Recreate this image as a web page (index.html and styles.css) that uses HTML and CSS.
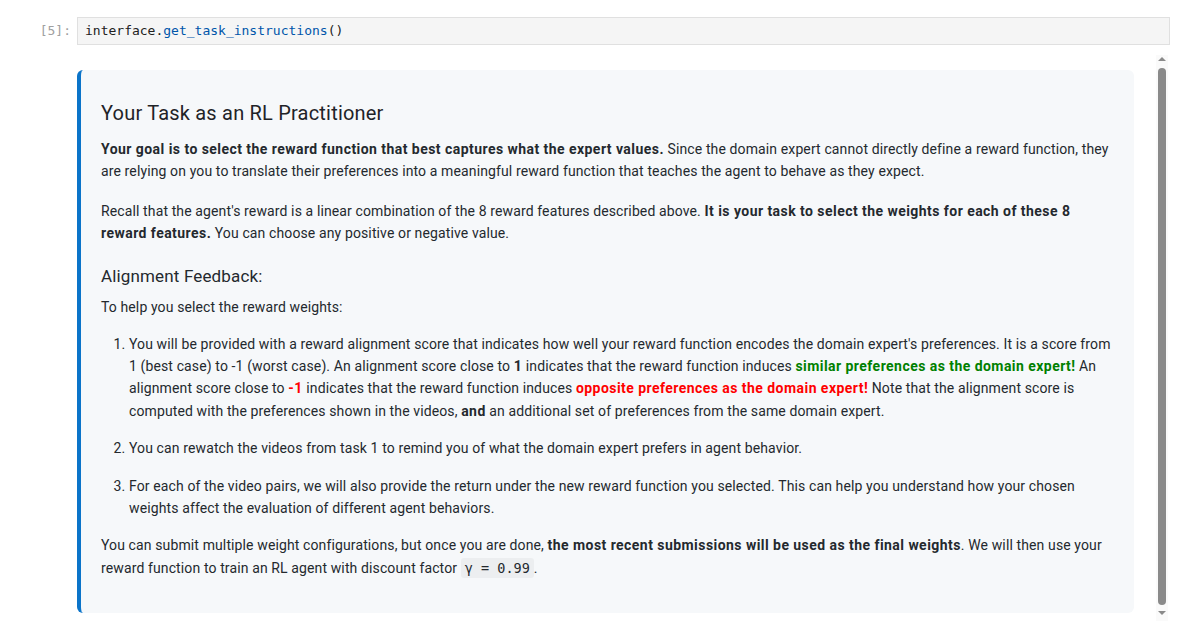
FILE: index.html
```html
<!DOCTYPE html>
<html>
<head>
<meta charset="utf-8">
<link rel="stylesheet" href="styles.css">
</head>
<body>
<div class="cell">
  <div class="input-row">
    <div class="prompt">[5]:</div>
    <div class="editor"><span class="c-var">interface.</span><span class="c-prop">get_task_instructions</span><span class="c-var">()</span></div>
  </div>
  <div class="output-row">
    <div class="output-area">
      <div class="card">
        <h2 class="title">Your Task as an RL Practitioner</h2>
        <p><b>Your goal is to select the reward function that best captures what the expert values.</b> Since the domain expert cannot directly define a reward function, they are relying on you to translate their preferences into a meaningful reward function that teaches the agent to behave as they expect.</p>
        <p>Recall that the agent's reward is a linear combination of the 8 reward features described above. <b>It is your task to select the weights for each of these 8 reward features.</b> You can choose any positive or negative value.</p>
        <h3 class="subtitle">Alignment Feedback:</h3>
        <p class="lead">To help you select the reward weights:</p>
        <ol class="steps">
          <li>You will be provided with a reward alignment score that indicates how well your reward function encodes the domain expert's preferences. It is a score from 1 (best case) to -1 (worst case). An alignment score close to <b>1</b> indicates that the reward function induces <b class="good">similar preferences as the domain expert!</b> An alignment score close to <b class="bad">-1</b> indicates that the reward function induces <b class="bad">opposite preferences as the domain expert!</b> Note that the alignment score is computed with the preferences shown in the videos, <b>and</b> an additional set of preferences from the same domain expert.</li>
          <li>You can rewatch the videos from task 1 to remind you of what the domain expert prefers in agent behavior.</li>
          <li>For each of the video pairs, we will also provide the return under the new reward function you selected. This can help you understand how your chosen weights affect the evaluation of different agent behaviors.</li>
        </ol>
        <p>You can submit multiple weight configurations, but once you are done, <b>the most recent submissions will be used as the final weights</b>. We will then use your reward function to train an RL agent with discount factor <code class="inline">γ = 0.99</code>.</p>
      </div>
    </div>
    <div class="scrollbar">
      <div class="arrow up"></div>
      <div class="thumb"></div>
      <div class="arrow down"></div>
    </div>
  </div>
</div>
</body>
</html>
```
FILE: styles.css
```css
html, body {
  margin: 0;
  padding: 0;
  background: #ffffff;
}
body {
  font-family: Roboto, "Noto Sans", sans-serif;
  color: #24292e;
  width: 1184px;
  height: 631px;
  overflow: hidden;
}
.cell {
  padding-top: 17px;
}
.input-row {
  display: flex;
  align-items: stretch;
  padding-right: 14px;
}
.prompt {
  width: 77px;
  box-sizing: border-box;
  padding-right: 6px;
  text-align: right;
  font-family: "DejaVu Sans Mono", monospace;
  font-size: 13px;
  color: #a0a0a0;
  line-height: 28px;
}
.editor {
  flex: 1;
  height: 28px;
  box-sizing: border-box;
  background: #f5f5f5;
  border: 1px solid #e0e0e0;
  padding-left: 7px;
  font-family: "DejaVu Sans Mono", monospace;
  font-size: 13px;
  line-height: 26px;
  color: #212121;
}
.c-prop { color: #0055aa; }
.c-var { color: #212121; }

.output-row {
  display: flex;
  margin-top: 10px;
  height: 566px;
}
.output-area {
  flex: 1;
  padding: 15px 22px 0 77px;
}
.card {
  background: #f6f8fa;
  border-left: 4px solid #0b74c9;
  border-radius: 6px;
  padding: 21px 20px 18px 20px;
  height: 543px;
  box-sizing: border-box;
  font-size: 14px;
  line-height: 22.4px;
  letter-spacing: 0.12px;
}
.title {
  font-size: 20px;
  font-weight: 400;
  margin: 9px 0 12px 0;
  line-height: 26px;
  letter-spacing: 0.2px;
  color: #1f2328;
}
.card p {
  margin: 0 0 17px 0;
}
.card p.lead {
  margin-bottom: 14.5px;
}
.subtitle {
  font-size: 17px;
  font-weight: 400;
  margin: 19px 0 8px 0;
  line-height: 24px;
  letter-spacing: 0.15px;
}
.card b {
  font-weight: 700;
  letter-spacing: 0.45px;
}
.good { color: #008000; }
.bad { color: #ff0000; }
.steps {
  margin: 0;
  padding-left: 28px;
}
.steps li {
  margin-bottom: 15px;
}
code.inline {
  font-family: "DejaVu Sans Mono", monospace;
  font-size: 13.5px;
  letter-spacing: 0;
  background: #eceef0;
  padding: 2px 4px;
  border-radius: 3px;
}
.scrollbar {
  width: 12px;
  margin-right: 16px;
  background: #fafafa;
  display: flex;
  flex-direction: column;
  align-items: center;
}
.arrow {
  width: 0;
  height: 0;
  border-left: 4px solid transparent;
  border-right: 4px solid transparent;
}
.arrow.up {
  border-bottom: 4px solid #8a8a8a;
  margin-top: 2px;
}
.arrow.down {
  border-top: 4px solid #8a8a8a;
  margin-bottom: 6px;
}
.thumb {
  width: 8px;
  flex: 1;
  margin: 7px 0 6px 0;
  background: #8a8a8a;
  border-radius: 4px;
}
```
